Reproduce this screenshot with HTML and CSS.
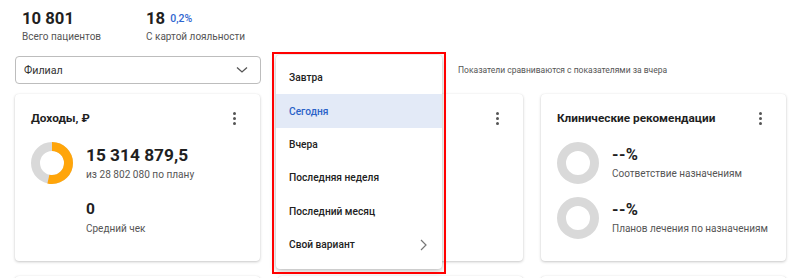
FILE: index.html
```html
<!DOCTYPE html>
<html lang="ru">
<head>
<meta charset="utf-8">
<link rel="stylesheet" href="styles.css">
</head>
<body>
<div class="page">
  <div class="stats">
    <div class="stat stat-first">
      <div class="stat-value">10 801</div>
      <div class="stat-label">Всего пациентов</div>
    </div>
    <div class="stat">
      <div class="stat-value">18 <span class="stat-delta">0,2%</span></div>
      <div class="stat-label">С картой лояльности</div>
    </div>
  </div>

  <div class="filters">
    <div class="select">
      <span>Филиал</span>
      <svg class="chev" width="12" height="8" viewBox="0 0 12 8"><path d="M1 1.5 L6 6 L11 1.5" fill="none" stroke="#555" stroke-width="1.3"/></svg>
    </div>
    <div class="period-slot"></div>
    <div class="hint">Показатели сравниваются с показателями за вчера</div>
  </div>

  <div class="cards">
    <div class="card">
      <div class="card-head">
        <div class="card-title">Доходы, ₽</div>
        <div class="kebab"><i></i><i></i><i></i></div>
      </div>
      <div class="metric">
        <svg class="donut" width="42" height="42" viewBox="0 0 42 42">
          <circle cx="21" cy="21" r="16.5" fill="none" stroke="#d9d9d9" stroke-width="9"/>
          <circle cx="21" cy="21" r="16.5" fill="none" stroke="#ffa50a" stroke-width="9" stroke-dasharray="55.2 200" transform="rotate(-90 21 21)"/>
        </svg>
        <div class="metric-text">
          <div class="big">15 314 879,5</div>
          <div class="sub">из 28 802 080 по плану</div>
        </div>
      </div>
      <div class="metric metric-plain">
        <div class="metric-text">
          <div class="mid">0</div>
          <div class="sub sub-lg">Средний чек</div>
        </div>
      </div>
    </div>

    <div class="card">
      <div class="card-head">
        <div class="card-title"></div>
        <div class="kebab"><i></i><i></i><i></i></div>
      </div>
    </div>

    <div class="card">
      <div class="card-head">
        <div class="card-title">Клинические рекомендации</div>
        <div class="kebab"><i></i><i></i><i></i></div>
      </div>
      <div class="metric">
        <svg class="donut" width="42" height="42" viewBox="0 0 42 42">
          <circle cx="21" cy="21" r="16.5" fill="none" stroke="#d9d9d9" stroke-width="9"/>
        </svg>
        <div class="metric-text">
          <div class="pct">--%</div>
          <div class="sub sub-lg">Соответствие назначениям</div>
        </div>
      </div>
      <div class="metric metric-next">
        <svg class="donut" width="42" height="42" viewBox="0 0 42 42">
          <circle cx="21" cy="21" r="16.5" fill="none" stroke="#d9d9d9" stroke-width="9"/>
        </svg>
        <div class="metric-text">
          <div class="pct">--%</div>
          <div class="sub sub-lg">Планов лечения по назначениям</div>
        </div>
      </div>
    </div>
  </div>

  <div class="cards cards-second">
    <div class="card card-short"></div>
    <div class="card card-short"></div>
    <div class="card card-short"></div>
  </div>
</div>

<div class="menu">
  <div class="menu-item">Завтра</div>
  <div class="menu-item active">Сегодня</div>
  <div class="menu-item">Вчера</div>
  <div class="menu-item">Последняя неделя</div>
  <div class="menu-item">Последний месяц</div>
  <div class="menu-item">Свой вариант
    <svg class="menu-chev" width="7" height="12" viewBox="0 0 7 12"><path d="M1 1 L6 6 L1 11" fill="none" stroke="#777" stroke-width="1.2"/></svg>
  </div>
</div>
<div class="highlight-box"></div>
</body>
</html>
```

FILE: styles.css
```css
* { box-sizing: border-box; }
html, body { margin: 0; padding: 0; }
body {
  width: 800px;
  height: 278px;
  overflow: hidden;
  background: #ffffff;
  font-family: Roboto, "Noto Sans", sans-serif;
  color: #1f1f1f;
  position: relative;
}
.page { padding: 0 0 0 15px; height: 278px; overflow: hidden; }

.stats { display: flex; padding: 8px 0 0 7px; height: 56px; }
.stat-first { width: 124px; }
.stat-value { font-size: 16.7px; font-weight: 700; line-height: 21px; }
.stat-delta { font-size: 10.5px; font-weight: 500; color: #2f66d0; vertical-align: 2px; margin-left: 1px; }
.stat-label { font-size: 10px; color: #555; line-height: 14px; margin-top: 1px; }

.filters { display: flex; align-items: center; height: 28px; }
.select {
  width: 246px; height: 28px;
  border: 1px solid #bdbdbd; border-radius: 4px;
  display: flex; align-items: center; justify-content: space-between;
  padding: 0 12px 0 8px;
  font-size: 10.7px; color: #333;
}
.period-slot { width: 197px; }
.hint { font-size: 8.5px; color: #555; white-space: nowrap; }

.cards { display: grid; grid-template-columns: repeat(3, 245px); column-gap: 18px; margin-top: 10px; }
.cards-second { margin-top: 15px; }
.card {
  height: 167px; background: #fff; border-radius: 4px;
  box-shadow: 0 1px 3px rgba(0,0,0,0.22), 0 0 1px rgba(0,0,0,0.08);
  padding: 16px 18px 0 16px;
}
.card-short { height: 20px; }
.card-head { display: flex; justify-content: space-between; align-items: center; height: 16px; }
.card-title { font-size: 11.8px; font-weight: 700; color: #1f1f1f; }
.kebab { display: flex; flex-direction: column; gap: 2px; padding-right: 6px; }
.kebab i { display: block; width: 3px; height: 3px; border-radius: 50%; background: #555; }

.metric { display: flex; align-items: center; margin-top: 16px; height: 42px; white-space: nowrap; }
.metric .donut { flex: none; margin-right: 13px; }
.metric-plain { margin-top: 12px; padding-left: 55px; }
.metric-next { margin-top: 13px; }
.big { font-size: 17.3px; font-weight: 700; line-height: 21px; }
.mid { font-size: 15.5px; font-weight: 700; line-height: 19px; }
.sub { font-size: 10.1px; color: #555; line-height: 13px; margin-top: 2px; }
.sub-lg { font-size: 10px; margin-top: 3px; }
.pct { font-size: 16.5px; font-weight: 700; line-height: 18px; letter-spacing: 0.4px; }

.menu {
  position: absolute; left: 276px; top: 55px; width: 166px; height: 214px;
  background: #fff; border-radius: 4px;
  box-shadow: 0 2px 6px rgba(0,0,0,0.25), 0 0 2px rgba(0,0,0,0.12);
  padding-top: 6px;
}
.menu-item {
  height: 33.4px; display: flex; align-items: center; justify-content: space-between;
  padding: 0 13px 0 13px; font-size: 10.2px; font-weight: 500; color: #222;
}
.menu-item.active { background: #e3eaf7; color: #2b62c8; }
.menu-chev { margin-right: 2px; }

.highlight-box {
  position: absolute; left: 272px; top: 52px; width: 174px; height: 222px;
  border: 2px solid #ff0000;
}
```
